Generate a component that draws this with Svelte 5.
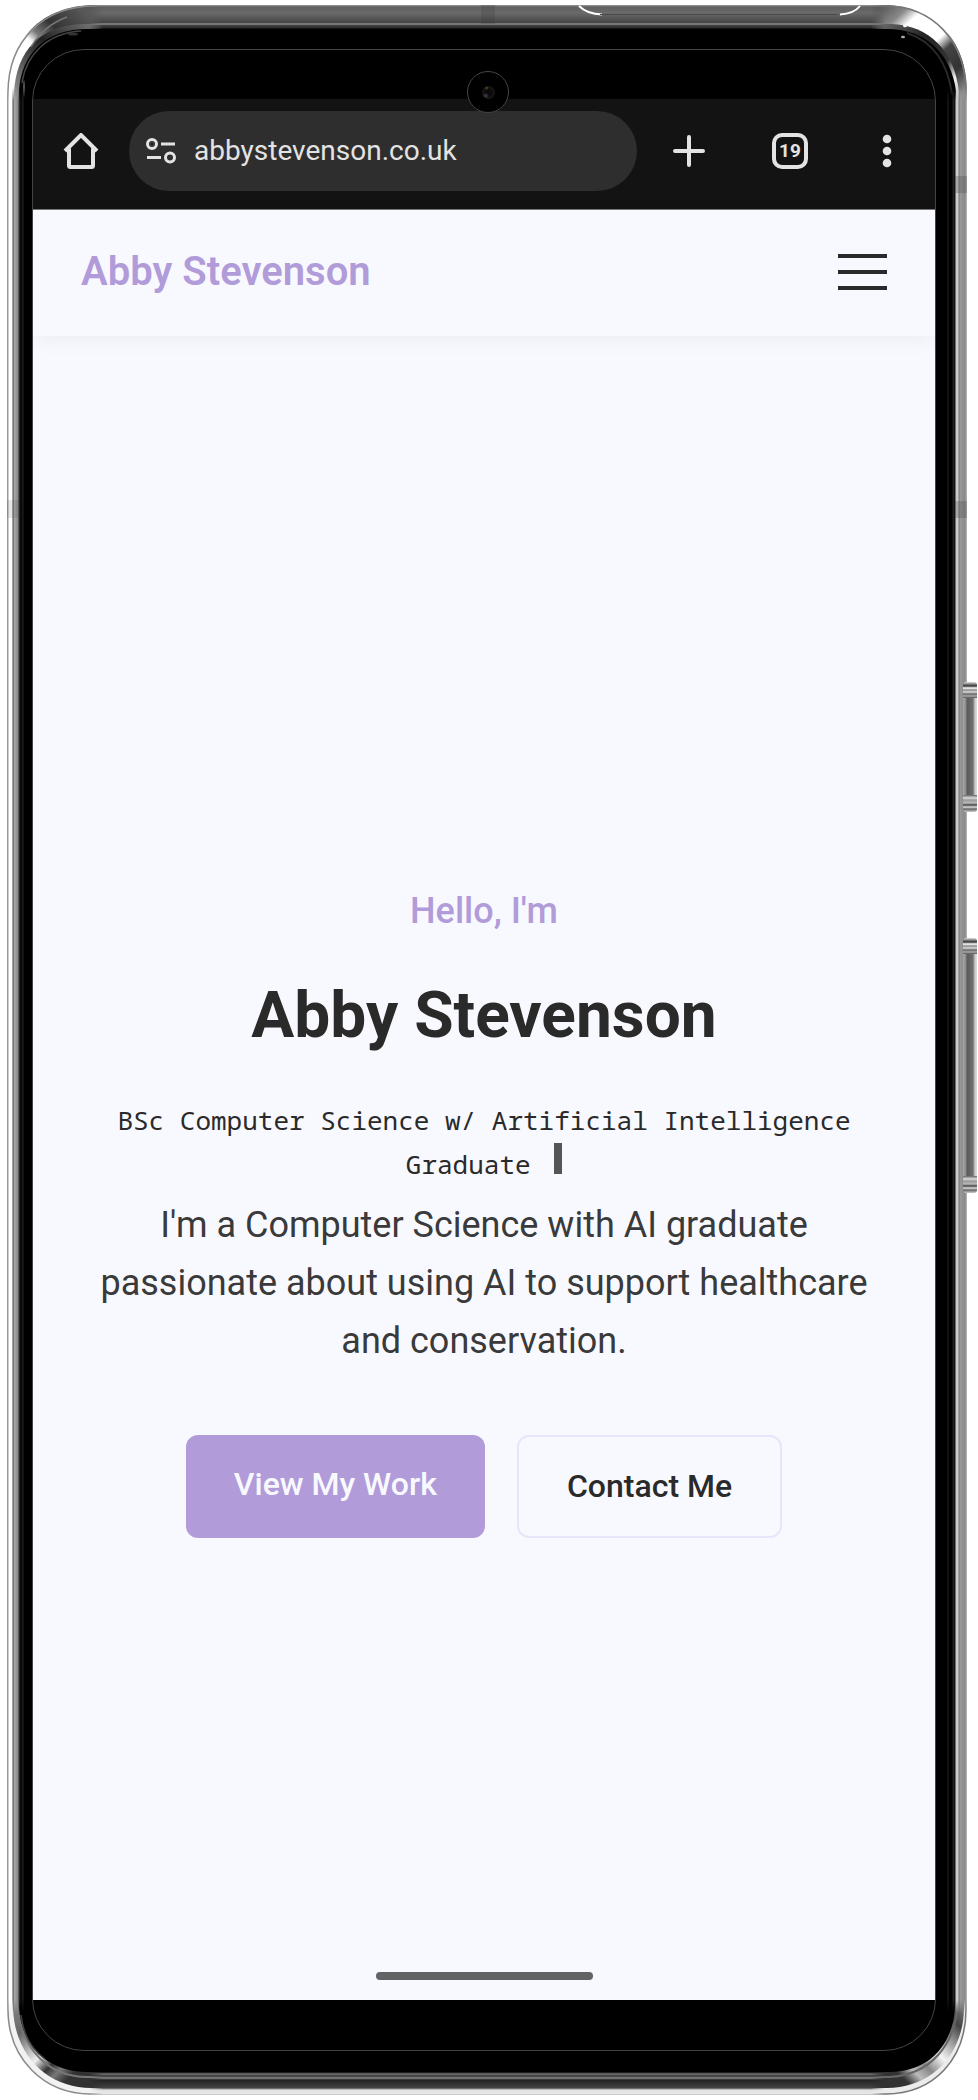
<script>
  const site = 'abbystevenson.co.uk';
  const owner = 'Abby Stevenson';
  let tabs = $state(19);
  let menuOpen = $state(false);
</script>

<div class="stage">
  <div class="phone">
    <span class="band band-top"></span>
    <span class="band band-left"></span>
    <span class="band band-right-high"></span>
    <span class="band band-right"></span>
    <svg class="slot" viewBox="0 0 284 12" width="284" height="12" aria-hidden="true">
      <path d="M1 1C6 6 12 9 24 9.500" fill="none" stroke="#fff" stroke-width="2" />
      <path d="M22 9.500H260" stroke="#4a4a4a" stroke-width="1" />
      <path d="M262 9.500C272 9 278 6 282 1" fill="none" stroke="#fff" stroke-width="2" />
    </svg>

    <svg class="corner tl" viewBox="0 0 96 96" width="96" height="96" aria-hidden="true">
      <defs>
        <linearGradient id="tl" gradientUnits="userSpaceOnUse" x1="4" y1="80" x2="74" y2="4">
          <stop offset="0" stop-color="#fff" />
          <stop offset=".44" stop-color="#fff" />
          <stop offset=".54" stop-color="#777" />
          <stop offset=".7" stop-color="#333" />
          <stop offset="1" stop-color="#585858" />
        </linearGradient>
        <linearGradient id="tl2" gradientUnits="userSpaceOnUse" x1="8" y1="96" x2="90" y2="20">
          <stop offset="0" stop-color="#999" />
          <stop offset=".3" stop-color="#555" />
          <stop offset=".55" stop-color="#222" />
          <stop offset="1" stop-color="#777" />
        </linearGradient>
      </defs>
      <rect width="96" height="96" fill="#fff" />
      <path d="M0 96V88C0 34 36 0 88 0H96V96Z" fill="url(#tl)" />
      <path d="M1 96V88C1 35 37 1 88 1H96" fill="none" stroke="#8a8a8a" stroke-width="1.500" />
      <path d="M7 96V88C9 45 34 20 76 19H96V96Z" fill="url(#tl2)" />
      <path d="M12 96V86C14 48 40 24 80 24H96V96Z" fill="#000" />
      <path d="M15 78C19 50 40 28 74 26" fill="none" stroke="#444" stroke-width="1.500" />
      <path d="M24 42C32 28 44 18 60 12" fill="none" stroke="#777" stroke-width="1.500" />
      <ellipse cx="66" cy="29" rx="5" ry="1.500" fill="#333" />
      <ellipse cx="17" cy="84" rx="1" ry="9" fill="#555" />
    </svg>
    <svg class="corner tr" viewBox="0 0 96 96" width="96" height="96" aria-hidden="true">
      <defs>
        <linearGradient id="tr" gradientUnits="userSpaceOnUse" x1="8" y1="2" x2="92" y2="92">
          <stop offset="0" stop-color="#555" />
          <stop offset=".16" stop-color="#888" />
          <stop offset=".26" stop-color="#fff" />
          <stop offset=".52" stop-color="#fff" />
          <stop offset=".62" stop-color="#444" />
          <stop offset=".8" stop-color="#333" />
          <stop offset="1" stop-color="#999" />
        </linearGradient>
        <linearGradient id="tr2" gradientUnits="userSpaceOnUse" x1="0" y1="20" x2="88" y2="96">
          <stop offset="0" stop-color="#777" />
          <stop offset=".4" stop-color="#222" />
          <stop offset=".7" stop-color="#333" />
          <stop offset=".84" stop-color="#eee" />
          <stop offset="1" stop-color="#bbb" />
        </linearGradient>
      </defs>
      <rect width="96" height="96" fill="#fff" />
      <path d="M96 96V88C96 34 62 0 14 0H0V96Z" fill="url(#tr)" />
      <path d="M95 96V88C95 35 61 1 14 1H0" fill="none" stroke="#777" stroke-width="1.500" />
      <path d="M88 96V88C84 46 58 20 20 19H0V96Z" fill="url(#tr2)" />
      <path d="M85 96V86C80 48 54 24 16 24H0V96Z" fill="#000" />
      <path d="M81 90C77 56 60 36 36 28" fill="none" stroke="#2a2a2a" stroke-width="2" />
      <ellipse cx="32" cy="32" rx="2" ry="1.200" fill="#aaa" />
      <ellipse cx="34" cy="21" rx="2" ry="1.200" fill="#fff" />
    </svg>
    <svg class="corner bl" viewBox="0 0 96 96" width="96" height="96" aria-hidden="true">
      <defs>
        <linearGradient id="bl" gradientUnits="userSpaceOnUse" x1="8" y1="0" x2="90" y2="84">
          <stop offset="0" stop-color="#888" />
          <stop offset=".24" stop-color="#666" />
          <stop offset=".5" stop-color="#eee" />
          <stop offset=".62" stop-color="#333" />
          <stop offset=".7" stop-color="#777" />
          <stop offset=".8" stop-color="#333" />
          <stop offset="1" stop-color="#303030" />
        </linearGradient>
      </defs>
      <rect width="96" height="96" fill="#fff" />
      <path d="M0 0V10C0 60 36 96 84 96H96V0Z" fill="#f2f2f2" />
      <path d="M1 0V10C1 60 37 95 84 95H96" fill="none" stroke="#8a8a8a" stroke-width="1.500" />
      <path d="M6 0V10C8 58 42 89 84 89H96V0Z" fill="url(#bl)" />
      <path d="M12 0V10C14 52 44 78 80 78H96" fill="none" stroke="#777" stroke-width="2" />
      <path d="M12 0V8C14 48 42 73 80 73H96V0Z" fill="#000" />
      <path d="M14 16C16 34 24 50 38 60" fill="none" stroke="#444" stroke-width="1.500" />
    </svg>
    <svg class="corner br" viewBox="0 0 96 96" width="96" height="96" aria-hidden="true">
      <defs>
        <linearGradient id="br" gradientUnits="userSpaceOnUse" x1="92" y1="0" x2="6" y2="88">
          <stop offset="0" stop-color="#888" />
          <stop offset=".18" stop-color="#444" />
          <stop offset=".34" stop-color="#aaa" />
          <stop offset=".46" stop-color="#f4f4f4" />
          <stop offset=".6" stop-color="#888" />
          <stop offset=".7" stop-color="#bbb" />
          <stop offset=".8" stop-color="#333" />
          <stop offset="1" stop-color="#303030" />
        </linearGradient>
      </defs>
      <rect width="96" height="96" fill="#fff" />
      <path d="M96 0V10C96 60 64 96 14 96H0V0Z" fill="#ececec" />
      <path d="M95 0V10C95 60 63 95 14 95H0" fill="none" stroke="#777" stroke-width="1.500" />
      <path d="M93 0V10C92 58 58 89 16 89H0V0Z" fill="url(#br)" />
      <path d="M87 4C84 46 60 76 18 78H0" fill="none" stroke="#666" stroke-width="2" />
      <path d="M84 0V8C82 48 56 73 18 73H0V0Z" fill="#000" />
    </svg>

    <span class="key key-power"></span>
    <span class="key key-volume"></span>

    <div class="screen">
      <div class="status"></div>

      <div class="toolbar">
        <button class="tool home" aria-label="Home">
          <svg viewBox="0 0 36 36" width="36" height="36">
            <path d="M2 18L18 2L34 18M6 15.500V32.500Q6 34 7.500 34H28.500Q30 34 30 32.500V15.500" fill="none" stroke="#e3e3e3" stroke-width="4" stroke-linejoin="miter" stroke-linecap="butt" />
          </svg>
        </button>
        <div class="omnibox">
          <svg viewBox="0 0 30 26" width="30" height="26" fill="none" stroke="#e3e3e3" stroke-width="3" aria-hidden="true">
            <circle cx="6" cy="6" r="4.500" />
            <circle cx="24" cy="19.500" r="4.500" />
            <path d="M15 6H29M1 19.500H15" />
          </svg>
          <input type="text" value={site} aria-label="Address" spellcheck="false" />
        </div>
        <div class="tools">
          <button class="tool" aria-label="New tab" onclick={() => (tabs += 1)}>
            <svg viewBox="0 0 32 32" width="32" height="32">
              <path d="M16 2V30M2 16H30" stroke="#e3e3e3" stroke-width="4" stroke-linecap="round" />
            </svg>
          </button>
          <button class="tool" aria-label="Open tabs"><span class="count">{tabs}</span></button>
          <button class="tool more" aria-label="More options">
            <svg viewBox="0 0 10 34" width="10" height="34" fill="#e3e3e3">
              <circle cx="5" cy="5" r="4.300" />
              <circle cx="5" cy="17" r="4.300" />
              <circle cx="5" cy="29" r="4.300" />
            </svg>
          </button>
        </div>
      </div>

      <header class="site-header">
        <a class="brand" href="#top">{owner}</a>
        <button class="burger" aria-label="Menu" aria-expanded={menuOpen} onclick={() => (menuOpen = !menuOpen)}>
          <span></span><span></span><span></span>
        </button>
      </header>

      <main class="hero" id="top">
        <p class="hello">Hello, I'm</p>
        <h1>{owner}</h1>
        <p class="typed">BSc Computer Science w/ Artificial Intelligence Graduate <span class="cursor"></span></p>
        <p class="intro">I'm a Computer Science with AI graduate passionate about using AI to support healthcare and conservation.</p>
        <div class="actions">
          <a class="btn primary" href="#work">View My Work</a>
          <a class="btn outline" href="#contact">Contact Me</a>
        </div>
      </main>

      <div class="gesture"><span></span></div>
      <div class="chin"></div>
    </div>

    <span class="camera"><i></i></span>
  </div>
</div>

<style>
  :global(body) {
    margin: 0;
    background: #fff;
  }

  .stage {
    padding: 5px 11px 5px 7px;
    font-family: Roboto, "Liberation Sans", sans-serif;
    line-height: 1.6;
    color: #2a2a2a;
  }

  p, h1 { margin: 0; }
  a { text-decoration: none; }
  button {
    border: 0;
    padding: 0;
    background: none;
    font: inherit;
    cursor: pointer;
  }

  /* Handset body */
  .phone {
    position: relative;
    padding: 44px 31px 44px 25px;
    background:
      linear-gradient(180deg, #999 0, #606060 2px, #6a6a6a 8px, #484848 17px, #444 18px, #aaa 19px, #444 20px, #2a2a2a 23px, #000 24px) 0 0 / 100% 24px no-repeat,
      linear-gradient(0deg, #aaa 0, #e8e8e8 1px, #e0e0e0 5px, #444 7px, #262626 14px, #222 15px, #888 17px, #333 19px, #777 21px, #000 23px) 0 100% / 100% 23px no-repeat,
      linear-gradient(90deg, #999 0, #999 1px, #fff 2px, #fff 5px, #444 6px, #aaa 7px, #888 11px, #333 12px, #000 14px, #222 16px, #000 17px) 0 0 / 18px 100% no-repeat,
      linear-gradient(270deg, #bbb 0, #888 2px, #999 7px, #777 8px, #ccc 9px, #ccc 11px, #111 12px, #222 14px, #000 15px, #000 18px, #222 19px, #000 20px) 100% 0 / 21px 100% no-repeat,
      #000;
  }

  /* Corners fade into the straight edges they join */
  .corner {
    position: absolute;
    display: block;
    mask-image:
      linear-gradient(var(--across), #000 82px, transparent 96px),
      linear-gradient(var(--down), #000 82px, transparent 96px);
    mask-composite: intersect;
  }
  .tl { top: 0; left: 0; --across: to right; --down: to bottom; }
  .tr { top: 0; right: 0; --across: to left; --down: to bottom; }
  .bl { bottom: 0; left: 0; --across: to right; --down: to top; }
  .br { bottom: 0; right: 0; --across: to left; --down: to top; }

  .slot {
    position: absolute;
    top: 0;
    right: 105px;
  }

  .band {
    position: absolute;
    background: rgba(60, 60, 60, 0.25);
  }
  .band-top { top: 0; left: 474px; width: 14px; height: 19px; }
  .band-left { top: 495px; left: 0; width: 12px; height: 18px; opacity: 0.5; }
  .band-right-high { top: 171px; right: 0; width: 12px; height: 17px; }
  .band-right { top: 496px; right: 0; width: 12px; height: 17px; }

  .key {
    position: absolute;
    right: -10px;
    width: 14px;
    box-sizing: border-box;
    border-radius: 3px;
    background:
      linear-gradient(180deg, #ddd 0, #333 4px, #fff 6px, #888 8px, #ddd 10px, #666 12px, #aaa 14px, #555 16px) 0 0 / 100% 16px no-repeat,
      linear-gradient(0deg, #ccc 0, #666 3px, #ddd 5px, #444 7px, #bbb 9px, #999 12px, #ddd 14px, #666 17px) 0 100% / 100% 17px no-repeat,
      linear-gradient(90deg, #aaa 0, #888 3px, #5a5a5a 4px, #707070 10px, #ccc 12px, #ddd 14px);
  }
  .key-power { top: 677px; height: 130px; }
  .key-volume { top: 933px; height: 255px; }

  .screen {
    position: relative;
    border: 1px solid #444;
    border-radius: 52px;
    overflow: hidden;
    background: #000;
  }

  .camera {
    position: absolute;
    top: 66px;
    left: 50%;
    width: 40px;
    height: 40px;
    margin-left: -20px;
    border: 1px solid #444;
    border-radius: 50%;
    background: #000;
    display: grid;
    place-items: center;
  }
  .camera i {
    width: 13px;
    height: 13px;
    border-radius: 50%;
    background:
      radial-gradient(circle at 35% 15%, #6a5220 0, transparent 2px),
      radial-gradient(circle at 30% 75%, #444 0, transparent 3px),
      radial-gradient(circle, #0a0a0c 30%, #1c1818 70%, #0a0a0c 100%);
  }

  /* Browser chrome */
  .status { height: 49px; }

  .toolbar {
    display: flex;
    align-items: center;
    gap: 28px;
    padding: 12px 28px 18px;
    background: #131313;
    border-bottom: 1px solid #777;
  }
  .tool {
    width: 48px;
    height: 48px;
    display: grid;
    place-items: center;
  }
  .home { width: 40px; }
  .more { width: 40px; }
  .tools {
    display: flex;
    gap: 53px;
  }
  .omnibox {
    flex: 1;
    min-width: 0;
    height: 80px;
    display: flex;
    align-items: center;
    gap: 18px;
    padding: 0 17px;
    border-radius: 40px;
    background: #2e2e2e;
  }
  .omnibox svg { flex: none; }
  .omnibox input {
    flex: 1;
    min-width: 0;
    height: 48px;
    padding: 0;
    border: 0;
    outline: 0;
    background: none;
    color: #e3e3e3;
    font: 400 28px/48px Roboto, sans-serif;
  }
  .count {
    box-sizing: border-box;
    width: 36px;
    height: 36px;
    display: grid;
    place-items: center;
    border: 4px solid #e3e3e3;
    border-radius: 10px;
    color: #e3e3e3;
    font-size: 19px;
    font-weight: 700;
    line-height: 28px;
  }

  /* Site */
  .site-header {
    position: relative;
    display: flex;
    align-items: center;
    justify-content: space-between;
    padding: 30px 48px 32px;
    background: #f8f9ff;
    box-shadow: 0 4px 20px rgba(0, 0, 0, 0.05);
  }
  .brand {
    color: #b19cd9;
    font-size: 40px;
    font-weight: 600;
  }
  .burger {
    width: 49px;
    display: grid;
    gap: 12px;
  }
  .burger span {
    height: 4px;
    background: #2a2a2a;
  }

  .hero {
    display: flex;
    flex-direction: column;
    padding: 546px 48px 434px;
    background: #f8f9ff;
    text-align: center;
  }
  .hello {
    color: #b19cd9;
    font-size: 36px;
    font-weight: 500;
    line-height: 58px;
  }
  h1 {
    margin-top: 37px;
    font-size: 64px;
    font-weight: 700;
    line-height: 77px;
  }
  .typed {
    margin-top: 44px;
    font-family: "Noto Sans Mono", "DejaVu Sans Mono", monospace;
    font-size: 26px;
    line-height: 44px;
  }
  .cursor {
    display: inline-block;
    width: 8px;
    height: 31px;
    margin-left: 8px;
    background: #555;
  }
  .intro {
    margin-top: 10px;
    color: #3a3a3a;
    font-size: 36px;
    line-height: 58px;
  }
  .actions {
    display: flex;
    justify-content: center;
    gap: 32px;
    margin-top: 65px;
  }
  .btn {
    padding: 24px 48px;
    border-radius: 12px;
    font-size: 32px;
    font-weight: 500;
    line-height: 51px;
  }
  .primary {
    background: #b19cd9;
    color: #f8f9ff;
  }
  .outline {
    border: 2px solid #e6e6fa;
    color: #2a2a2a;
  }

  .gesture {
    display: flex;
    justify-content: center;
    padding-bottom: 20px;
    background: #f8f9ff;
  }
  .gesture span {
    width: 217px;
    height: 8px;
    border-radius: 4px;
    background: #636366;
  }
  .chin { height: 50px; }
</style>
